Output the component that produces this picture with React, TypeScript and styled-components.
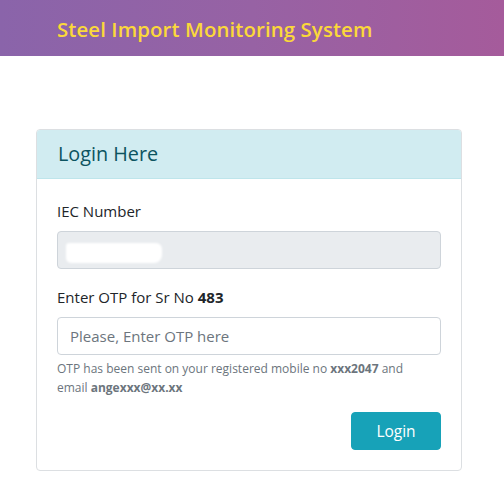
import React from "react";
import styled, { createGlobalStyle } from "styled-components";

const Global = createGlobalStyle`
  html, body { margin: 0; padding: 0; background: #ffffff; }
  body { font-family: "Open Sans", "Noto Sans", Arial, sans-serif; color: #212529; }
  * { box-sizing: border-box; }
`;

const TopBar = styled.header`
  height: 56px;
  background: linear-gradient(90deg, #8a64aa 0%, #9762a4 50%, #a55b9b 100%);
  display: flex;
  align-items: center;
  padding-left: 57px;
`;

const Brand = styled.h1`
  margin: 0;
  font-family: "Open Sans", "Noto Sans", sans-serif;
  font-weight: 600;
  font-size: 20.4px;
  letter-spacing: 0.1px;
  color: #fbd83a;
  transform: translateY(1px);
`;

const Main = styled.main`
  padding: 73px 42px 0 36px;
`;

const Card = styled.section`
  width: 426px;
  border: 1px solid #dcdfe2;
  border-radius: 4px;
  overflow: hidden;
  background: #fff;
`;

const CardHeader = styled.div`
  background: #d1ecf1;
  border-bottom: 1px solid #bee5eb;
  padding: 12px 20px 12px 21px;
  height: 49px;
  display: flex;
  align-items: center;
`;

const CardTitle = styled.h2`
  margin: 0;
  font-size: 19.8px;
  font-weight: 500;
  color: #0c5460;
  line-height: 24px;
`;

const CardBody = styled.div`
  padding: 20px;
  display: flex;
  flex-direction: column;
`;

const Group = styled.div<{ $gap?: number }>`
  display: flex;
  flex-direction: column;
  margin-bottom: ${(p) => p.$gap ?? 16}px;
`;

const Label = styled.label`
  font-size: 15px;
  line-height: 24px;
  margin-bottom: 8px;
  color: #212529;
  b { font-weight: 700; }
`;

const InputBox = styled.div<{ $disabled?: boolean }>`
  position: relative;
  height: 38px;
  border: 1px solid #ced4da;
  border-radius: 4px;
  background: ${(p) => (p.$disabled ? "#e9ecef" : "#fff")};
  display: flex;
  align-items: center;
  padding: 0 12px;
`;

const Input = styled.input`
  border: none;
  outline: none;
  background: transparent;
  width: 100%;
  font-family: inherit;
  font-size: 15px;
  color: #495057;
  padding: 0;
  &::placeholder { color: #6c757d; opacity: 1; }
`;

const Redact = styled.span`
  position: absolute;
  left: 8px;
  top: 11px;
  width: 96px;
  height: 20px;
  background: #fff;
  border-radius: 3px 6px 8px 5px;
  filter: blur(1px);
`;

const Help = styled.small`
  margin-top: 4px;
  max-width: 362px;
  font-size: 12px;
  line-height: 19.2px;
  color: #6c757d;
  b { font-weight: 700; }
`;

const Actions = styled.div`
  display: flex;
  justify-content: flex-end;
  margin-top: 15px;
`;

const Button = styled.button`
  width: 90px;
  height: 38px;
  border: 1px solid #17a2b8;
  border-radius: 4px;
  background: #17a2b8;
  color: #fff;
  font-family: inherit;
  font-size: 15.5px;
  cursor: pointer;
`;

export default function App() {
  return (
    <>
      <Global />
      <TopBar>
        <Brand>Steel Import Monitoring System</Brand>
      </TopBar>
      <Main>
        <Card>
          <CardHeader>
            <CardTitle>Login Here</CardTitle>
          </CardHeader>
          <CardBody>
            <Group>
              <Label>IEC Number</Label>
              <InputBox $disabled>
                <Redact />
              </InputBox>
            </Group>
            <Group $gap={0}>
              <Label>
                Enter OTP for Sr No <b>483</b>
              </Label>
              <InputBox>
                <Input placeholder="Please, Enter OTP here" />
              </InputBox>
              <Help>
                OTP has been sent on your registered mobile no <b>xxx2047</b> and
                email <b>angexxx@xx.xx</b>
              </Help>
            </Group>
            <Actions>
              <Button>Login</Button>
            </Actions>
          </CardBody>
        </Card>
      </Main>
    </>
  );
}
